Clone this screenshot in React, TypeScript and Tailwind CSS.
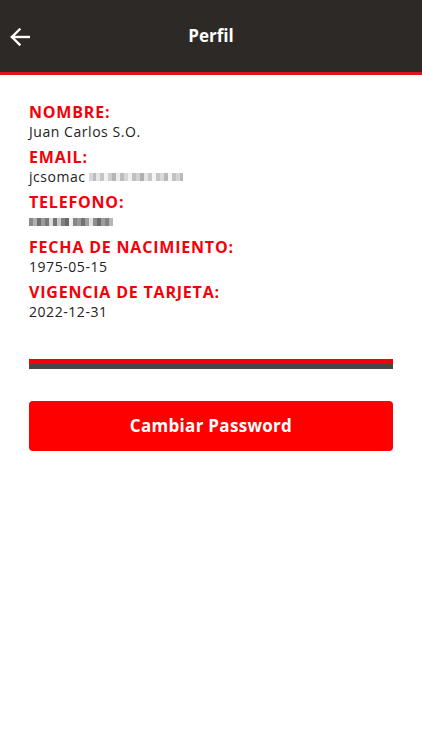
import React from "react";

const font = { fontFamily: '"Open Sans", "Liberation Sans", sans-serif' };

function Pixels({ cells }: { cells: { w: number; c: string }[] }) {
  return (
    <span className="flex items-center">
      {cells.map((c, i) => (
        <span key={i} className="block h-[8px]" style={{ width: c.w, background: c.c }} />
      ))}
    </span>
  );
}

const emailCells = [
  { w: 4, c: "#d8d8d8" }, { w: 3, c: "#bdbdbd" }, { w: 4, c: "#e6e6e6" }, { w: 4, c: "#c4c4c4" },
  { w: 4, c: "#f2f2f2" }, { w: 4, c: "#cfcfcf" }, { w: 4, c: "#b5b5b5" }, { w: 4, c: "#ececec" },
  { w: 4, c: "#bcbcbc" }, { w: 4, c: "#d6d6d6" }, { w: 4, c: "#f0f0f0" }, { w: 4, c: "#c0c0c0" },
  { w: 4, c: "#d2d2d2" }, { w: 4, c: "#aeaeae" }, { w: 4, c: "#e4e4e4" }, { w: 4, c: "#c8c8c8" },
  { w: 4, c: "#f4f4f4" }, { w: 4, c: "#c6c6c6" }, { w: 4, c: "#dadada" }, { w: 4, c: "#b8b8b8" },
  { w: 4, c: "#f6f6f6" }, { w: 4, c: "#c2c2c2" }, { w: 4, c: "#d4d4d4" }, { w: 3, c: "#bababa" },
];

const phoneCells = [
  { w: 4, c: "#8a8a8a" }, { w: 4, c: "#b0b0b0" }, { w: 4, c: "#6f6f6f" }, { w: 4, c: "#9c9c9c" },
  { w: 4, c: "#7a7a7a" }, { w: 4, c: "#dcdcdc" }, { w: 4, c: "#757575" }, { w: 4, c: "#c8c8c8" },
  { w: 4, c: "#808080" }, { w: 4, c: "#6a6a6a" }, { w: 4, c: "#f0f0f0" }, { w: 4, c: "#878787" },
  { w: 4, c: "#9a9a9a" }, { w: 4, c: "#727272" }, { w: 4, c: "#a0a0a0" }, { w: 4, c: "#e2e2e2" },
  { w: 4, c: "#8e8e8e" }, { w: 4, c: "#6c6c6c" }, { w: 4, c: "#9e9e9e" }, { w: 4, c: "#828282" },
  { w: 4, c: "#b6b6b6" },
];

function Field({ label, children }: { label: string; children: React.ReactNode }) {
  return (
    <div className="flex flex-col">
      <div className="h-[19px] text-[16px] leading-[19px] font-bold text-[#f40009] tracking-[0.8px]">{label}</div>
      <div className="h-[19px] flex items-center text-[14px] leading-[19px] text-[#222222] tracking-[0.55px]">{children}</div>
    </div>
  );
}

export default function App() {
  return (
    <div className="w-[422px] h-[750px] bg-white" style={font}>
      <div className="h-[72px] bg-[#2d2926] flex items-center relative">
        <button className="absolute left-[9px] top-[27px] w-[22px] h-[20px] flex items-center justify-center">
          <svg width="20" height="18" viewBox="0 0 20 18" fill="none" stroke="white" strokeWidth="2.4" strokeLinecap="square">
            <path d="M2 9 H19" />
            <path d="M9.5 1.5 L2 9 L9.5 16.5" />
          </svg>
        </button>
        <div className="flex-1 text-center text-white font-bold text-[17px]">Perfil</div>
      </div>
      <div className="h-[3px] bg-[#e2131a]" />
      <div className="px-[29px] pt-[28px] flex flex-col gap-[7px]">
        <Field label="NOMBRE:">Juan Carlos S.O.</Field>
        <Field label="EMAIL:">
          <span>jcsomac</span>
          <span className="w-[3px]" />
          <Pixels cells={emailCells} />
        </Field>
        <Field label="TELEFONO:">
          <Pixels cells={phoneCells} />
        </Field>
        <Field label="FECHA DE NACIMIENTO:">1975-05-15</Field>
        <Field label="VIGENCIA DE TARJETA:">2022-12-31</Field>
      </div>
      <div className="mx-[29px] mt-[38px]">
        <div className="h-[5px] bg-[#f40009]" />
        <div className="h-[5px] bg-[#4a4646]" />
      </div>
      <div className="mx-[29px] mt-[32px]">
        <button className="w-full h-[50px] rounded-[4px] bg-[#fe0000] text-white font-bold text-[17px] tracking-[0.3px]">
          Cambiar Password
        </button>
      </div>
    </div>
  );
}
